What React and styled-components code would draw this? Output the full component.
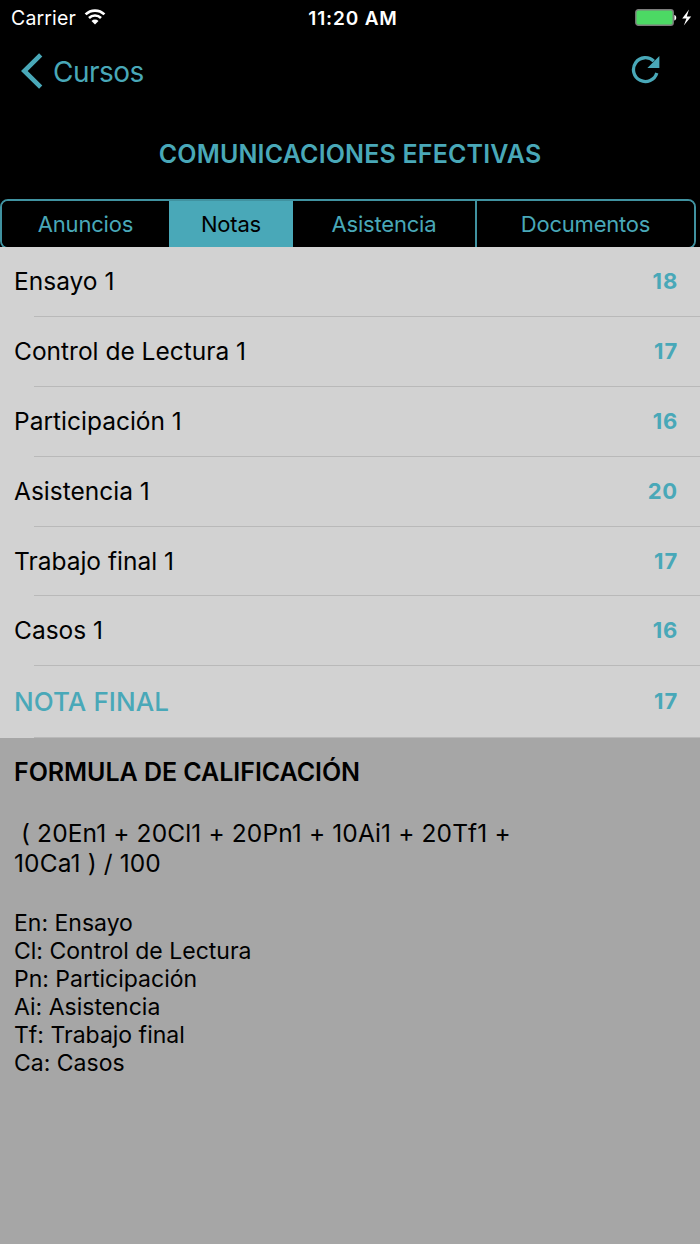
import React, { useState } from 'react';
import styled, { createGlobalStyle } from 'styled-components';

const tabs = [
  { name: 'Anuncios', width: 167 },
  { name: 'Notas', width: 124 },
  { name: 'Asistencia', width: 182 },
  { name: 'Documentos', width: 219 },
];

const grades = [
  { name: 'Ensayo 1', grade: 18, height: 70 },
  { name: 'Control de Lectura 1', grade: 17, height: 70 },
  { name: 'Participación 1', grade: 16, height: 70 },
  { name: 'Asistencia 1', grade: 20, height: 70 },
  { name: 'Trabajo final 1', grade: 17, height: 69 },
  { name: 'Casos 1', grade: 16, height: 70 },
];

const legend = [
  'En: Ensayo',
  'Cl: Control de Lectura',
  'Pn: Participación',
  'Ai: Asistencia',
  'Tf: Trabajo final',
  'Ca: Casos',
];

const WifiIcon = () => (
  <svg width="22" height="16" viewBox="0 0 22 16" fill="none">
    <path d="M1.6 5.4a13.4 13.4 0 0 1 18.8 0" stroke="#fff" strokeWidth="2.7" />
    <path d="M5 9a8.6 8.6 0 0 1 12 0" stroke="#fff" strokeWidth="2.6" />
    <path d="M11 15.6L7.5 12a5 5 0 0 1 7 0z" fill="#fff" />
  </svg>
);

const BatteryIcon = () => (
  <svg width="58" height="20" viewBox="0 0 58 20">
    <rect
      x="0.8"
      y="1.8"
      width="37.4"
      height="15.4"
      rx="2.5"
      fill="#4cd964"
      stroke="#7d7d7d"
      strokeWidth="1.4"
    />
    <path d="M39.3 7c2.6 0.4 2.6 5.2 0 5.6z" fill="#fff" />
    <path d="M54 1.5L47.2 10.6h4.3L48.8 17.4 56.2 8.5h-4.4z" fill="#fff" />
  </svg>
);

const BackIcon = () => (
  <svg width="22" height="36" viewBox="0 0 22 36" fill="none">
    <path d="M19.7 1.8L3.3 18l16.4 16.1" stroke="#49a8b8" strokeWidth="4.6" />
  </svg>
);

const RefreshIcon = () => (
  <svg width="30" height="30" viewBox="0 0 30 30" fill="none">
    <path
      d="M25.8 18A11.9 11.9 0 1 1 22.8 6.2"
      stroke="#49a8b8"
      strokeWidth="3.3"
    />
    <path d="M28.4 1V13H16.4z" fill="#49a8b8" />
  </svg>
);

const App = () => {
  const [activeTab, setActiveTab] = useState('Notas');

  return (
    <Screen>
      <GlobalStyle />
      <StatusBar>
        <Carrier>
          <span>Carrier</span>
          <WifiIcon />
        </Carrier>
        <Clock>11:20 AM</Clock>
        <Battery>
          <BatteryIcon />
        </Battery>
      </StatusBar>

      <NavBar>
        <BackButton type="button">
          <BackIcon />
          <span>Cursos</span>
        </BackButton>
        <RefreshButton type="button" aria-label="Actualizar">
          <RefreshIcon />
        </RefreshButton>
      </NavBar>

      <Title>COMUNICACIONES EFECTIVAS</Title>

      <TabsClip>
        <Tabs>
          {tabs.map(({ name, width }) => (
            <Tab
              key={name}
              type="button"
              $width={width}
              $active={activeTab === name}
              onClick={() => setActiveTab(name)}
            >
              {name}
            </Tab>
          ))}
        </Tabs>
      </TabsClip>

      <GradeList>
        {grades.map(({ name, grade, height }) => (
          <Row key={name} $height={height}>
            <RowName>{name}</RowName>
            <Grade>{grade}</Grade>
          </Row>
        ))}
        <Row $height={72}>
          <FinalName>NOTA FINAL</FinalName>
          <Grade>17</Grade>
        </Row>
      </GradeList>

      <FormulaPanel>
        <h2>FORMULA DE CALIFICACIÓN</h2>
        <Formula>
          {' ( 20En1 + 20Cl1 + 20Pn1 + 10Ai1 + 20Tf1 +\n10Ca1 ) / 100'}
        </Formula>
        <Legend>
          {legend.map((item) => (
            <li key={item}>{item}</li>
          ))}
        </Legend>
      </FormulaPanel>
    </Screen>
  );
};

const GlobalStyle = createGlobalStyle`
  * {
    box-sizing: border-box;
    margin: 0;
    padding: 0;
  }

  body {
    background: #000;
    font-family: Inter, 'Liberation Sans', sans-serif;
  }

  button {
    border: none;
    background: none;
    font-family: inherit;
    cursor: pointer;
  }

  svg {
    display: block;
    flex-shrink: 0;
  }
`;

const Screen = styled.main`
  display: flex;
  flex-direction: column;
  width: 700px;
  height: 1244px;
  background: #000;
  overflow: hidden;
`;

const StatusBar = styled.header`
  display: grid;
  grid-template-columns: 1fr auto 1fr;
  align-items: center;
  height: 36px;
  padding: 0 7px 0 11px;
  color: #fff;
`;

const Carrier = styled.div`
  display: flex;
  align-items: center;
  gap: 8px;
  font-size: 19.5px;
  letter-spacing: 0.15px;

  svg {
    margin-bottom: 3px;
  }
`;

const Clock = styled.div`
  margin-left: 2px;
  font-size: 19px;
  font-weight: 600;
  letter-spacing: 0.85px;
`;

const Battery = styled.div`
  display: flex;
  justify-content: flex-end;
`;

const NavBar = styled.nav`
  display: flex;
  justify-content: space-between;
  align-items: center;
  height: 70px;
  padding: 0 39px 0 21px;
`;

const BackButton = styled.button`
  display: flex;
  align-items: center;
  gap: 10px;
  color: #49a8b8;
  font-size: 28px;
  letter-spacing: -0.5px;

  span {
    padding-top: 1px;
  }
`;

const RefreshButton = styled.button`
  margin-bottom: 2px;
`;

const Title = styled.h1`
  height: 93px;
  color: #49a8b8;
  font-size: 25px;
  font-weight: 600;
  letter-spacing: 0.17px;
  line-height: 96px;
  text-align: center;
`;

/* the bottom edge of the control is cut off by the list */
const TabsClip = styled.div`
  height: 48px;
  overflow: hidden;
`;

const Tabs = styled.div`
  display: flex;
  width: 696px;
  height: 50px;
  border: 2px solid #4092a0;
  border-radius: 8px;
  overflow: hidden;
`;

const Tab = styled.button`
  width: ${({ $width }) => $width}px;
  background: ${({ $active }) => ($active ? '#49a8b8' : '#000')};
  color: ${({ $active }) => ($active ? '#000' : '#49a8b8')};
  font-size: 22px;
  letter-spacing: -0.2px;

  &:last-child {
    flex: 1;
    border-left: 2px solid #4092a0;
  }
`;

const GradeList = styled.section`
  background: #d2d2d2;
`;

const Row = styled.div`
  display: flex;
  justify-content: space-between;
  align-items: center;
  height: ${({ $height }) => $height}px;
  padding: 0 22px 2px 14px;
  background: linear-gradient(#b9b9b9, #b9b9b9) 34px 100% / 100% 1px no-repeat;
`;

const RowName = styled.span`
  font-size: 24.5px;
`;

const FinalName = styled.span`
  color: #49a8b8;
  font-size: 26px;
  font-weight: 550;
  letter-spacing: 0.1px;
`;

const Grade = styled.span`
  color: #49a8b8;
  font-size: 22px;
  font-weight: 700;
  letter-spacing: 0.8px;
`;

const FormulaPanel = styled.section`
  flex: 1;
  padding: 19px 14px;
  background: #a6a6a6;

  h2 {
    font-size: 25px;
    font-weight: 600;
    letter-spacing: -0.04px;
    line-height: 30px;
  }
`;

const Formula = styled.p`
  margin-top: 31px;
  font-size: 24.5px;
  letter-spacing: 0.12px;
  line-height: 30px;
  white-space: pre;
`;

const Legend = styled.ul`
  margin-top: 31px;
  list-style: none;
  font-size: 23px;
  line-height: 28.1px;
`;

export default App;
